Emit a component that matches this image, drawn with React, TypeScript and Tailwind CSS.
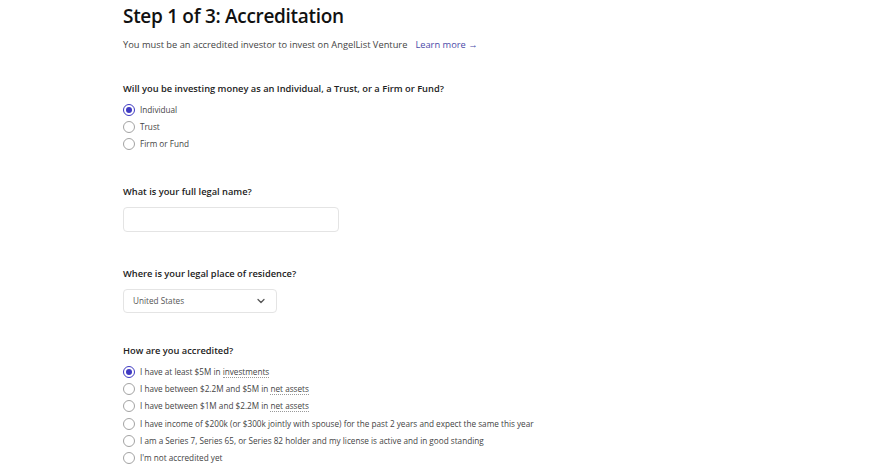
import { ChevronDown } from "lucide-react"

const ENTITY_OPTIONS = ["Individual", "Trust", "Firm or Fund"]

type Accreditation = { pre: string; link?: string }

const ACCREDITATION_OPTIONS: Accreditation[] = [
  { pre: "I have at least $5M in ", link: "investments" },
  { pre: "I have between $2.2M and $5M in ", link: "net assets" },
  { pre: "I have between $1M and $2.2M in ", link: "net assets" },
  { pre: "I have income of $200k (or $300k jointly with spouse) for the past 2 years and expect the same this year" },
  { pre: "I am a Series 7, Series 65, or Series 82 holder and my license is active and in good standing" },
  { pre: "I'm not accredited yet" },
]

function Radio({ checked }: { checked?: boolean }) {
  return (
    <span
      className={`flex h-[12px] w-[12px] shrink-0 items-center justify-center rounded-full border ${
        checked ? "border-[#3f3ac2] border-[1.5px]" : "border-[#a3a3a3]"
      }`}
    >
      {checked && <span className="h-[6px] w-[6px] rounded-full bg-[#3f3ac2]" />}
    </span>
  )
}

export default function App() {
  return (
    <div className="min-h-[470px] w-[880px] bg-white font-['Open_Sans',sans-serif] text-[#1f1f1f]">
      <div className="pl-[123px] pt-[3px]">
        <h1 className="text-[19px] font-semibold leading-[26px] tracking-[-0.3px] text-[#111]">
          Step 1 of 3: Accreditation
        </h1>
        <p className="mt-[10px] text-[9.3px] leading-[12px] text-[#444]">
          You must be an accredited investor to invest on AngelList Venture
          <a className="ml-[8px] text-[#4a4aa8]">Learn more →</a>
        </p>

        <h2 className="mt-[32px] text-[9.3px] font-semibold leading-[12px] text-[#222]">
          Will you be investing money as an Individual, a Trust, or a Firm or Fund?
        </h2>
        <div className="mt-[9px] flex flex-col gap-[5px]">
          {ENTITY_OPTIONS.map((option, i) => (
            <label key={option} className="flex h-[12px] items-center gap-[5px] text-[8.2px] text-[#444]">
              <Radio checked={i === 0} />
              {option}
            </label>
          ))}
        </div>

        <h2 className="mt-[36px] text-[9.3px] font-semibold leading-[12px] text-[#222]">What is your full legal name?</h2>
        <div className="mt-[9px] h-[25px] w-[216px] rounded-[4px] border border-[#e4e4e4]" />

        <h2 className="mt-[36px] text-[9.3px] font-semibold leading-[12px] text-[#222]">
          Where is your legal place of residence?
        </h2>
        <div className="mt-[9px] flex h-[24px] w-[154px] items-center justify-between rounded-[4px] border border-[#e4e4e4] pl-[9px] pr-[9px] text-[8.2px] text-[#555]">
          United States
          <ChevronDown className="h-[12px] w-[12px] text-[#555]" strokeWidth={2.5} />
        </div>

        <h2 className="mt-[32px] text-[9.3px] font-semibold leading-[12px] text-[#222]">How are you accredited?</h2>
        <div className="mt-[9px] flex flex-col gap-[5px]">
          {ACCREDITATION_OPTIONS.map((option, i) => (
            <label key={i} className="flex h-[12.2px] items-center gap-[5px] text-[8.2px] text-[#444]">
              <Radio checked={i === 0} />
              <span>
                {option.pre}
                {option.link && <span className="border-b border-dotted border-[#999]">{option.link}</span>}
              </span>
            </label>
          ))}
        </div>
      </div>
    </div>
  )
}
